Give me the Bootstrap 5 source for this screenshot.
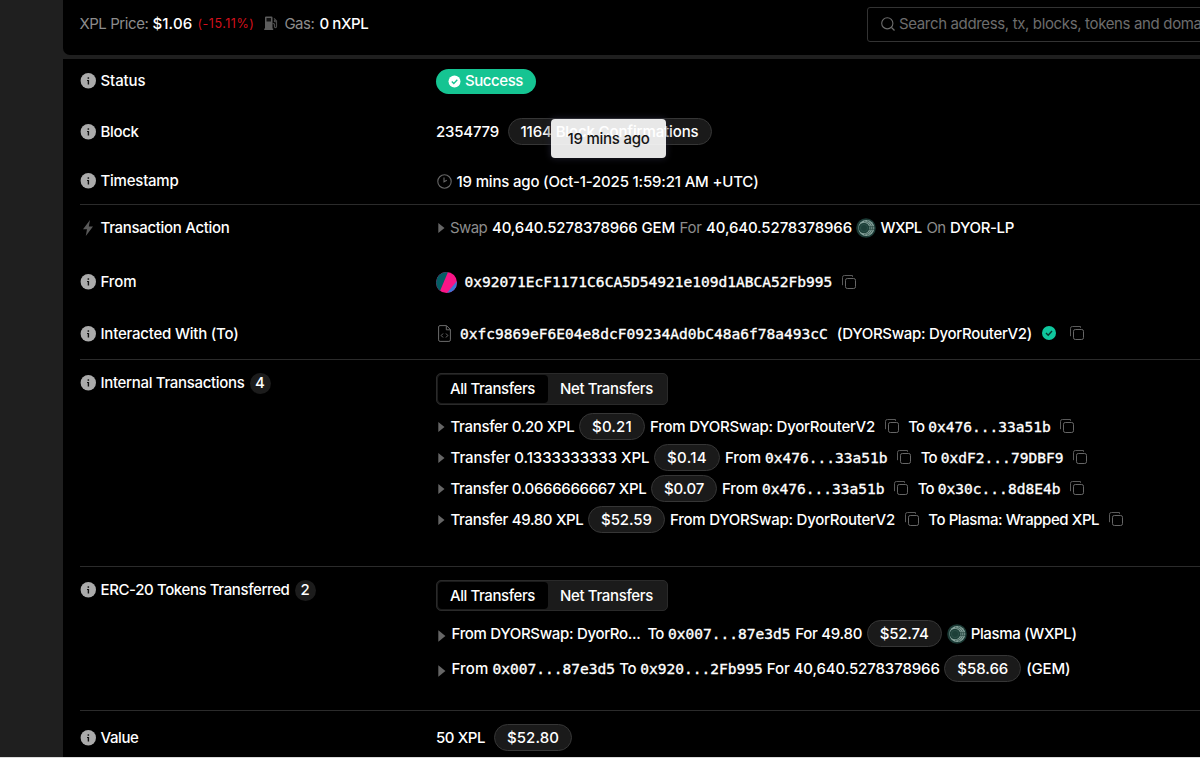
<!DOCTYPE html>
<html lang="en" data-bs-theme="dark">
<head>
<meta charset="utf-8">
<title>Transaction Details</title>
<link href="https://cdn.jsdelivr.net/npm/bootstrap@5.3.0/dist/css/bootstrap.min.css" rel="stylesheet">
<style>
body{background:#1f1f1f;color:#fff;font:500 15px/20px Inter,"Liberation Sans",sans-serif;height:758px;overflow:hidden}
.page{height:757px;padding-left:63px;overflow:hidden}
.strip{height:1px;background:#dcdcdc}
.topbar{height:55px;background:#000;border-bottom-left-radius:7px;margin-bottom:4px;padding:0 0 7px 16.4px}
.searchbox{width:400px;height:35px;border:1px solid #333;border-radius:3px;padding-left:13px;color:#6d6d6d;font-weight:400;margin-left:498.6px;flex:none}
.details{background:#000;height:698px;padding-left:17px}
.sect{border-bottom:1px solid #2b2b2b}
.lab{width:356px;height:20px;flex:none}
.lab svg{margin-right:4.5px}
.fit{display:inline-block;white-space:pre;flex:none}
.hex{font:400 14.55px/20px "DejaVu Sans Mono","Liberation Mono",monospace;-webkit-text-stroke:.35px #fff;flex:none;white-space:pre}
.dim{color:#8c8c8c;font-weight:400}
.chip{height:27px;border:1px solid #363636;border-radius:14px;background:#1a1a1a;padding:0 12px;flex:none}
.trow{height:31px}
.trow .chip{margin:0 5px 0 4.5px}
.cnt{width:21px;height:21px;border-radius:50%;background:#1c1c1c;margin-left:5px}
.okpill{height:25px;border-radius:13px;background:#15c492;padding:0 12px 0 12px;width:100px}
.switcher{width:232px;height:32px;background:#1b1b1b;border:1px solid #2a2a2a;border-radius:5px;padding:1px}
.switcher .on{background:#000;border-radius:4px;width:110px;height:28px;padding-left:12px}
.switcher .off{padding-left:12px}
.copy{margin:-1px 9.7px 0 9.5px;width:14px;height:14px;flex:none}
.tri{flex:none;margin:0 5.5px 0 2px}
.tip{position:absolute;left:42.5px;top:0;width:115px;height:39px;border-radius:4px;background:rgba(255,255,255,.9);color:#151515;box-shadow:0 0 6px 1px rgba(32,32,48,.8);border:0}
.r-st{height:44px}.r-bl{height:57px}.r-ti{height:44px;padding-bottom:0}
.r-ac{height:46px}.r-fr{height:62px}.r-to{height:41px}
svg{flex:none;display:block}
</style>
</head>
<body>
<svg width="0" height="0" class="position-absolute">
<defs>
<symbol id="info" viewBox="0 0 16 16"><circle cx="8.300" cy="7.800" r="7.700" fill="#ababab"/><rect x="7.600" y="4.300" width="1.500" height="1.500" fill="#111"/><path d="M7 6.900h2.100v4.500H7.700V7.900H7z" fill="#111"/></symbol>
<symbol id="copy" viewBox="0 0 14 14"><rect x="3.500" y="3.500" width="10" height="10" rx="1.800" fill="none" stroke="#666"/><path d="M.5 10.200V2.300Q.5.500 2.400.500H10.500V1.800" fill="none" stroke="#5a5a5a"/></symbol>
<symbol id="tri" viewBox="0 0 7 10"><path d="M.3 0 6.500 5 .3 10z" fill="#666"/></symbol>
<symbol id="plasma" viewBox="0 0 20 20"><circle cx="10" cy="10" r="9.800" fill="#1b3a35"/><circle cx="10.300" cy="10" r="8" fill="#87a39c"/><circle cx="8" cy="10" r="5.300" fill="#1d3f38"/><circle cx="8" cy="10" r="3.600" fill="none" stroke="#31584f" stroke-width=".6"/><g fill="none" stroke="#2c4c45" stroke-width=".7"><path d="M8 3.500Q14.500 4.500 14.500 10T8 16.500M11 2.800Q16.500 5 16.500 10T11 17.200"/><path d="M13 8.500h5M13 10h5.300M13 11.500h5"/></g></symbol>
</defs>
</svg>
<div class="page">
  <header class="topbar d-flex align-items-center">
    <span class="fit dim" data-w="69">XPL Price:</span>
    <span class="fit ms-1" data-w="40">$1.06</span>
    <span class="fit" data-w="57" style="color:#d5101c;font-size:12.5px;font-weight:400;margin-left:5px">(-15.11%)</span>
    <svg width="14" height="14" viewBox="0 0 14 14" style="margin:-2px 6px 0 10px"><path d="M1 1.500Q1 .5 2 .5h5.500Q8.500.5 8.500 1.500v11h.7V14H.2v-1.500H1z" fill="#5c5c5c"/><rect x="2.500" y="2" width="4.500" height="3.500" fill="#111"/><path d="M8.500 7.500q2-.2 2 1.500v1.500q0 1.200 1 1.200t1-1.200V5L10 2.300M10.500 4v1.500l2 .5" fill="none" stroke="#4b4b4b" stroke-width="1.200"/></svg>
    <span class="fit dim" data-w="30">Gas:</span>
    <span class="fit" data-w="49" style="margin-left:5px">0 nXPL</span>
    <div class="searchbox d-flex align-items-center"><svg width="14" height="14" viewBox="0 0 14 14" class="me-1"><circle cx="6.300" cy="6.300" r="5.600" fill="none" stroke="#6d6d6d" stroke-width="1.100"/><path d="m10.500 10.500 3 3" stroke="#6d6d6d" stroke-width="1.200"/></svg><span class="fit" data-w="322">Search address, tx, blocks, tokens and domains</span></div>
  </header>
  <main class="details">
    <section class="sect">
      <div class="d-flex align-items-center r-st">
        <div class="lab d-flex align-items-center"><svg width="16" height="16"><use href="#info"/></svg><span class="fit" data-w="45">Status</span></div>
        <div class="okpill d-flex align-items-center"><svg width="13" height="13" viewBox="0 0 13 13" class="me-1"><circle cx="6.500" cy="6.500" r="6" fill="#fff"/><path d="m3.800 6.500 2 2 3.500-3.800" fill="none" stroke="#15c492" stroke-width="1.300"/></svg><span class="fit" data-w="58">Success</span></div>
      </div>
      <div class="d-flex align-items-center r-bl">
        <div class="lab d-flex align-items-center"><svg width="16" height="16"><use href="#info"/></svg><span class="fit" data-w="38">Block</span></div>
        <span class="fit" data-w="63">2354779</span>
        <div class="chip d-flex align-items-center position-relative" style="width:204px;margin-left:8.5px"><span class="fit" data-w="178">1164 Block Confirmations</span>
          <div class="tip d-flex align-items-center justify-content-center"><span class="fit" data-w="82">19 mins ago</span></div></div>
      </div>
      <div class="d-flex align-items-center r-ti">
        <div class="lab d-flex align-items-center" style="margin-top:-2px"><svg width="16" height="16"><use href="#info"/></svg><span class="fit" data-w="78">Timestamp</span></div>
        <svg width="15" height="15" viewBox="0 0 15 15" style="margin:-1px 5px 0 .5px"><circle cx="7.500" cy="7.500" r="6.700" fill="none" stroke="#666" stroke-width="1.100"/><path d="M7 3.500v4.300l2.800-1.500" fill="none" stroke="#666" stroke-width="1.100"/></svg><span class="fit" data-w="302">19 mins ago (Oct-1-2025 1:59:21 AM +UTC)</span>
      </div>
    </section>
    <section class="sect" style="padding-bottom:5px">
      <div class="d-flex align-items-center r-ac">
        <div class="lab d-flex align-items-center"><svg width="16" height="16" viewBox="0 0 16 16"><path d="M10 0 3 9.200h4L5.800 16 13 6.600H8.800z" fill="#595959"/></svg><span class="fit" data-w="129">Transaction Action</span></div>
        <svg class="tri" width="7" height="10" style="margin-right:5px"><use href="#tri"/></svg><span class="fit dim" data-w="37">Swap</span><span class="fit" data-w="183" style="margin-left:5px">40,640.5278378966 GEM</span><span class="fit dim" data-w="22" style="margin-left:4.500px">For</span><span class="fit" data-w="146" style="margin-left:4.500px">40,640.5278378966</span><svg width="20" height="20" style="margin:0 4.500px 0 4px"><use href="#plasma"/></svg><span class="fit" data-w="41">WXPL</span><span class="fit dim" data-w="19" style="margin-left:5px">On</span><span class="fit" data-w="64" style="margin-left:4.500px">DYOR-LP</span>
      </div>
      <div class="d-flex align-items-center r-fr">
        <div class="lab d-flex align-items-center"><svg width="16" height="16"><use href="#info"/></svg><span class="fit" data-w="36">From</span></div>
        <svg width="21" height="21" viewBox="0 0 21 21" style="margin-right:7.500px"><defs><clipPath id="av"><circle cx="10.500" cy="10.500" r="10.500"/></clipPath></defs><g clip-path="url(#av)"><path fill="#f91587" d="M0 0h21v21H0z"/><path fill="#035d64" d="M0 0h12L4 19 0 21z"/><path fill="#3c76d6" d="m21 9-10 12h10z"/></g></svg><span class="hex">0x92071EcF1171C6CA5D54921e109d1ABCA52Fb995</span><svg class="copy"><use href="#copy"/></svg>
      </div>
      <div class="d-flex align-items-center r-to">
        <div class="lab d-flex align-items-center"><svg width="16" height="16"><use href="#info"/></svg><span class="fit" data-w="138">Interacted With (To)</span></div>
        <svg width="13" height="17" viewBox="0 0 13 17" style="margin:0 9px 0 2px"><path d="M2 .6h6.500L12.400 4.500v10.400q0 1.500-1.500 1.500H2.100Q.6 16.400.6 14.900V2Q.6.6 2 .6zM8.300.8v4h4M5 8.500l-1.800 2L5 12.500M8 8.500l1.800 2L8 12.500" fill="none" stroke="#6c6c6c"/></svg><span class="hex">0xfc9869eF6E04e8dcF09234Ad0bC48a6f78a493cC</span><span class="fit" data-w="195" style="margin-left:9px">(DYORSwap: DyorRouterV2)</span><svg width="14" height="14" viewBox="0 0 14 14" style="margin:-1px 5px 0 10px"><circle cx="7" cy="7" r="7" fill="#0fc79e"/><path d="m4 7 2.200 2.200L10 5" fill="none" stroke="#06372d" stroke-width="1.400"/></svg><svg class="copy"><use href="#copy"/></svg>
      </div>
    </section>
    <section class="sect d-flex" style="height:207px;padding-top:13px">
      <div class="lab d-flex align-items-center"><svg width="16" height="16"><use href="#info"/></svg><span class="fit" data-w="144">Internal Transactions</span><span class="cnt d-flex align-items-center justify-content-center">4</span></div>
      <div>
        <div class="switcher d-flex align-items-center" style="margin-bottom:6px"><div class="on d-flex align-items-center"><span class="fit" data-w="85">All Transfers</span></div><div class="off"><span class="fit" data-w="93">Net Transfers</span></div></div>
        <div class="trow d-flex align-items-center"><svg class="tri" width="7" height="10"><use href="#tri"/></svg><span class="fit" data-w="124">Transfer 0.20 XPL</span><div class="chip d-flex align-items-center"><span class="fit" data-w="40">$0.21</span></div><span class="fit" data-w="225">From DYORSwap: DyorRouterV2</span><svg class="copy"><use href="#copy"/></svg><span class="fit me-1" data-w="16">To</span><span class="hex">0x476...33a51b</span><svg class="copy"><use href="#copy"/></svg></div>
        <div class="trow d-flex align-items-center"><svg class="tri" width="7" height="10"><use href="#tri"/></svg><span class="fit" data-w="199">Transfer 0.1333333333 XPL</span><div class="chip d-flex align-items-center"><span class="fit" data-w="40">$0.14</span></div><span class="fit me-1" data-w="36">From</span><span class="hex">0x476...33a51b</span><svg class="copy"><use href="#copy"/></svg><span class="fit me-1" data-w="16">To</span><span class="hex">0xdF2...79DBF9</span><svg class="copy"><use href="#copy"/></svg></div>
        <div class="trow d-flex align-items-center"><svg class="tri" width="7" height="10"><use href="#tri"/></svg><span class="fit" data-w="196">Transfer 0.0666666667 XPL</span><div class="chip d-flex align-items-center"><span class="fit" data-w="40">$0.07</span></div><span class="fit me-1" data-w="36">From</span><span class="hex">0x476...33a51b</span><svg class="copy"><use href="#copy"/></svg><span class="fit me-1" data-w="16">To</span><span class="hex">0x30c...8d8E4b</span><svg class="copy"><use href="#copy"/></svg></div>
        <div class="trow d-flex align-items-center"><svg class="tri" width="7" height="10"><use href="#tri"/></svg><span class="fit" data-w="133">Transfer 49.80 XPL</span><div class="chip d-flex align-items-center"><span class="fit" data-w="51">$52.59</span></div><span class="fit" data-w="225">From DYORSwap: DyorRouterV2</span><svg class="copy"><use href="#copy"/></svg><span class="fit" data-w="171">To Plasma: Wrapped XPL</span><svg class="copy"><use href="#copy"/></svg></div>
      </div>
    </section>
    <section class="sect d-flex" style="height:144px;padding-top:13px">
      <div class="lab d-flex align-items-center"><svg width="16" height="16"><use href="#info"/></svg><span class="fit" data-w="189">ERC-20 Tokens Transferred</span><span class="cnt d-flex align-items-center justify-content-center">2</span></div>
      <div>
        <div class="switcher d-flex align-items-center" style="height:31px;margin-bottom:5px"><div class="on d-flex align-items-center" style="height:27px"><span class="fit" data-w="85">All Transfers</span></div><div class="off"><span class="fit" data-w="93">Net Transfers</span></div></div>
        <div class="trow d-flex align-items-center" style="height:35px"><svg class="tri" width="8" height="12" viewBox="0 0 7 10" style="margin-top:4px"><path d="M.3 0 6.500 5 .3 10z" fill="#666"/></svg><span class="fit" data-w="189">From DYORSwap: DyorRo...</span><span class="fit" data-w="16" style="margin:0 4.500px 0 7px">To</span><span class="hex">0x007...87e3d5</span><span class="fit" data-w="67" style="margin-left:4.500px">For 49.80</span><div class="chip d-flex align-items-center"><span class="fit" data-w="49">$52.74</span></div><svg width="20" height="20" class="me-1"><use href="#plasma"/></svg><span class="fit" data-w="106">Plasma (WXPL)</span></div>
        <div class="trow d-flex align-items-center" style="height:35px"><svg class="tri" width="8" height="12" viewBox="0 0 7 10" style="margin-top:4px"><path d="M.3 0 6.500 5 .3 10z" fill="#666"/></svg><span class="fit me-1" data-w="37">From</span><span class="hex">0x007...87e3d5</span><span class="fit mx-1" data-w="17">To</span><span class="hex">0x920...2Fb995</span><span class="fit" data-w="173" style="margin-left:4px">For 40,640.5278378966</span><div class="chip d-flex align-items-center"><span class="fit" data-w="51">$58.66</span></div><span class="fit" data-w="44">(GEM)</span></div>
      </div>
    </section>
    <section class="d-flex align-items-center" style="height:46px;padding-top:7px">
      <div class="lab d-flex align-items-center"><svg width="16" height="16"><use href="#info"/></svg><span class="fit" data-w="38">Value</span></div>
      <span class="fit" data-w="49">50 XPL</span><div class="chip d-flex align-items-center" style="margin-left:9px"><span class="fit" data-w="52">$52.80</span></div>
    </section>
  </main>
</div>
<div class="strip"></div>
<script src="https://cdn.jsdelivr.net/npm/bootstrap@5.3.0/dist/js/bootstrap.bundle.min.js"></script>
<script>
document.querySelectorAll('.fit').forEach(function(el){
  var w=+el.dataset.w,n=el.textContent.length,cur=el.getBoundingClientRect().width;
  el.style.letterSpacing=((w-cur)/n).toFixed(3)+'px';
  el.style.width=w+'px';
});
</script>
</body>
</html>
